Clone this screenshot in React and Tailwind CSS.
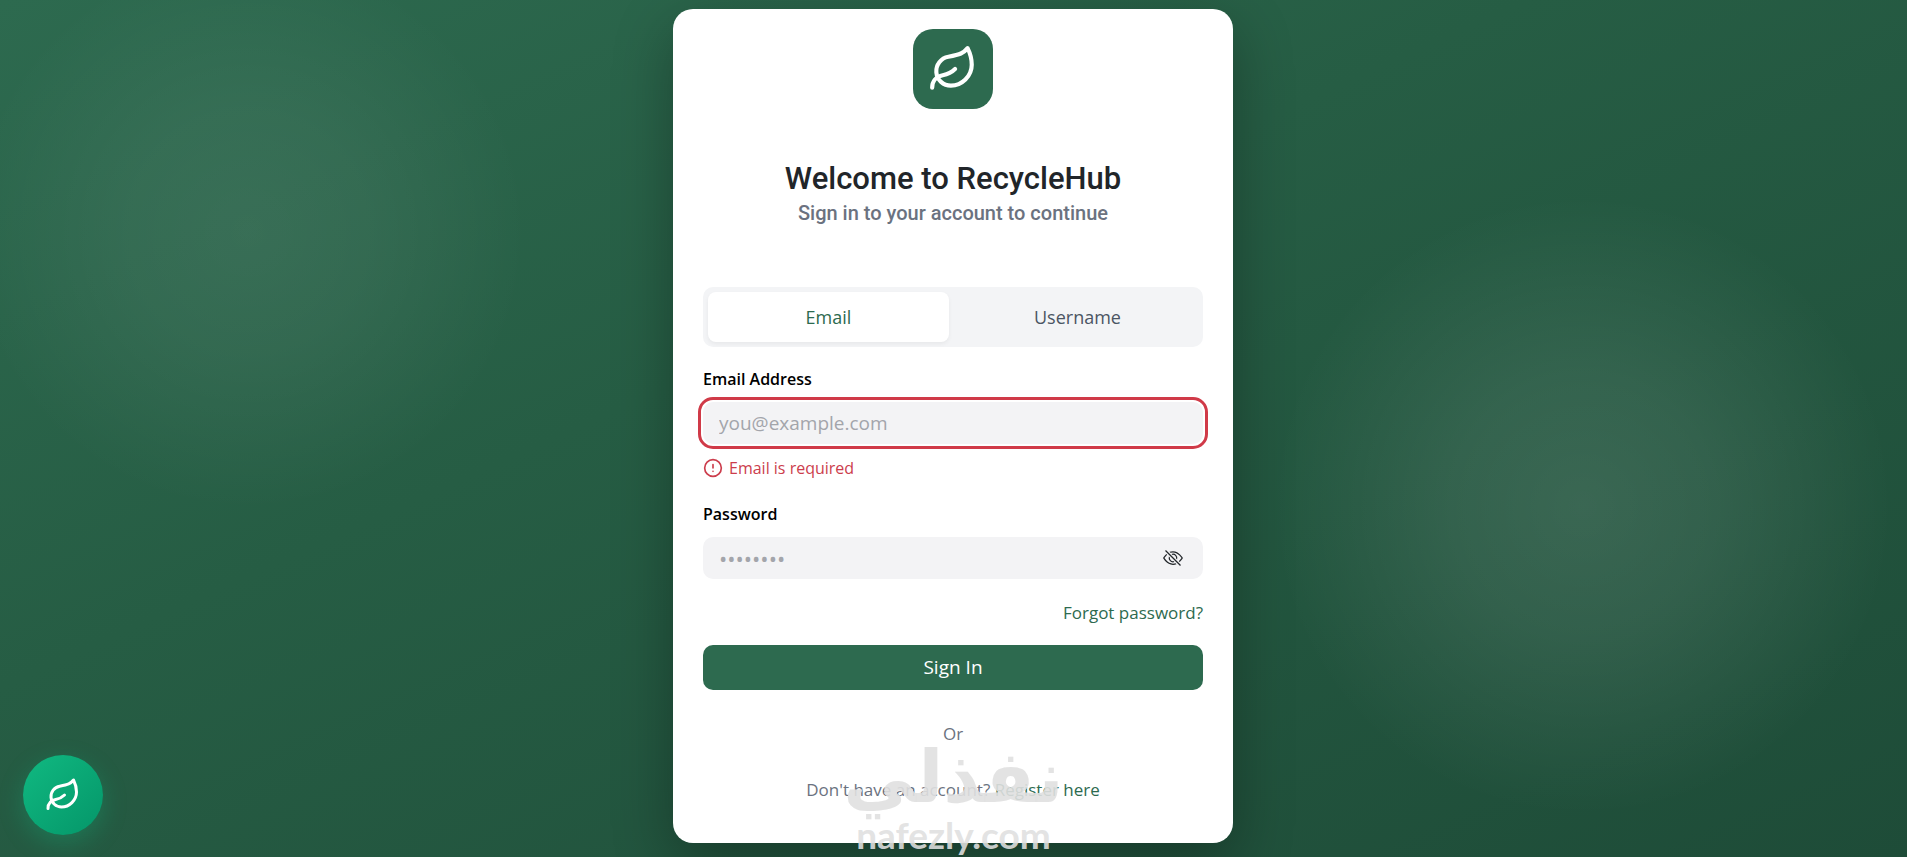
import { useState } from "react"
import { CircleAlert, Leaf } from "lucide-react"
import { BsEye, BsEyeSlash } from "react-icons/bs"

const tabs = ["Email", "Username"];

export default function Login(){

    const [tab, setTab] = useState("Email");
    const [showPassword, setShowPassword] = useState(false);

    return (
        <div className="relative flex min-h-screen items-start justify-center overflow-hidden bg-linear-to-br from-[#2d6a4f] via-[#265d44] via-40% to-[#1e4c38] pt-[9px] pr-px pb-[13px] font-['Open_Sans',sans-serif]">
            {/* soft light spots behind the card */}
            <div className="pointer-events-none absolute inset-0 bg-[radial-gradient(circle_at_13%_27%,rgba(255,255,255,0.07),rgba(255,255,255,0.05)_120px,transparent_280px),radial-gradient(circle_at_83%_59%,rgba(255,255,255,0.11),rgba(255,255,255,0.08)_130px,transparent_310px)]" />

            <main className="relative flex w-full max-w-[560px] flex-col rounded-[20px] bg-white px-[30px] pt-5 pb-[41px] shadow-[0_20px_60px_rgba(0,0,0,0.3)]">
                <div className="mx-auto flex size-20 items-center justify-center rounded-[20px] bg-[#2d6a4f]">
                    <Leaf size={50} color="#fff" />
                </div>

                <header className="mt-[50px] text-center font-[Roboto,sans-serif] font-medium">
                    <h1 className="text-[31px] leading-10 text-[#212529]">Welcome to RecycleHub</h1>
                    <p className="text-xl leading-7 text-[#6b7280]">Sign in to your account to continue</p>
                </header>

                <div className="mt-[60px] flex gap-2 rounded-[10px] bg-[#f3f4f6] p-[5px]">
                    {tabs.map((item) => (
                        <button
                            key={item}
                            type="button"
                            onClick={() => setTab(item)}
                            className={`h-[50px] flex-1 rounded-lg text-lg ${tab === item
                                ? 'bg-white text-[#2d6a4f] shadow-[0_2px_4px_rgba(0,0,0,0.05)]'
                                : 'text-[#4b5563]'
                            }`}
                        >
                            {item}
                        </button>
                    ))}
                </div>

                <form className="mt-5 flex flex-col" onSubmit={(e) => e.preventDefault()}>
                    <label htmlFor="login" className="text-base font-semibold text-black">
                        {tab === "Email" ? "Email Address" : "Username"}
                    </label>
                    <input
                        id="login"
                        type="text"
                        placeholder="you@example.com"
                        className="mt-[11px] h-[42px] rounded-[10px] bg-[#f3f3f5] px-4 text-[19px] outline-3 outline-offset-2 outline-[#d03a48] placeholder:text-[#a3a5ab]"
                    />
                    <p className="mt-3 flex items-center gap-[6px] text-base text-[#cc3d4c]">
                        <CircleAlert size={20} />
                        Email is required
                    </p>

                    <label htmlFor="password" className="mt-[22px] text-base font-semibold text-black">Password</label>
                    <div className="mt-[11px] flex h-[42px] items-center rounded-[10px] bg-[#f3f3f5] pr-5 pl-4">
                        <input
                            id="password"
                            type={showPassword ? "text" : "password"}
                            placeholder="••••••••"
                            className="min-w-0 flex-1 bg-transparent text-[22px] outline-none placeholder:text-[#a3a5ab]"
                        />
                        <button type="button" aria-label="Show password" onClick={() => setShowPassword(!showPassword)} className="text-[#212529]">
                            {showPassword ? <BsEye size={20} /> : <BsEyeSlash size={20} />}
                        </button>
                    </div>

                    <a href="#forgot" className="mt-[22px] self-end text-[17px] leading-6 text-[#2d6a4f]">Forgot password?</a>

                    <button type="submit" className="mt-5 h-[45px] rounded-[10px] bg-[#2d6a4f] text-[19px] font-medium text-white">
                        Sign In
                    </button>
                </form>

                <p className="mt-8 text-center text-[17px] leading-6 text-[#6b7280]">Or</p>
                <p className="mt-8 text-center text-[17px] leading-6 text-[#6b7280]">
                    Don't have an account? <a href="#register" className="text-[#2d6a4f]">Register here</a>
                </p>
            </main>

            <button
                type="button"
                aria-label="Assistant"
                className="absolute bottom-[22px] left-[23px] flex size-20 items-center justify-center rounded-full bg-linear-135 from-[#10b981] to-[#059669] shadow-[0_8px_24px_rgba(16,185,129,0.3)]"
            >
                <Leaf size={36} color="#fff" />
            </button>

            {/* watermark */}
            <div className="pointer-events-none absolute inset-x-0 bottom-0 flex flex-col items-center text-[#e0e0e0]/90">
                <span lang="ar" dir="rtl" className="font-['DejaVu_Sans',sans-serif] text-[72px] leading-[72px] font-bold">نفذلي</span>
                <span className="font-[Lato,sans-serif] text-[37px] leading-11 font-bold">nafezly.com</span>
            </div>
        </div>
    )
}
